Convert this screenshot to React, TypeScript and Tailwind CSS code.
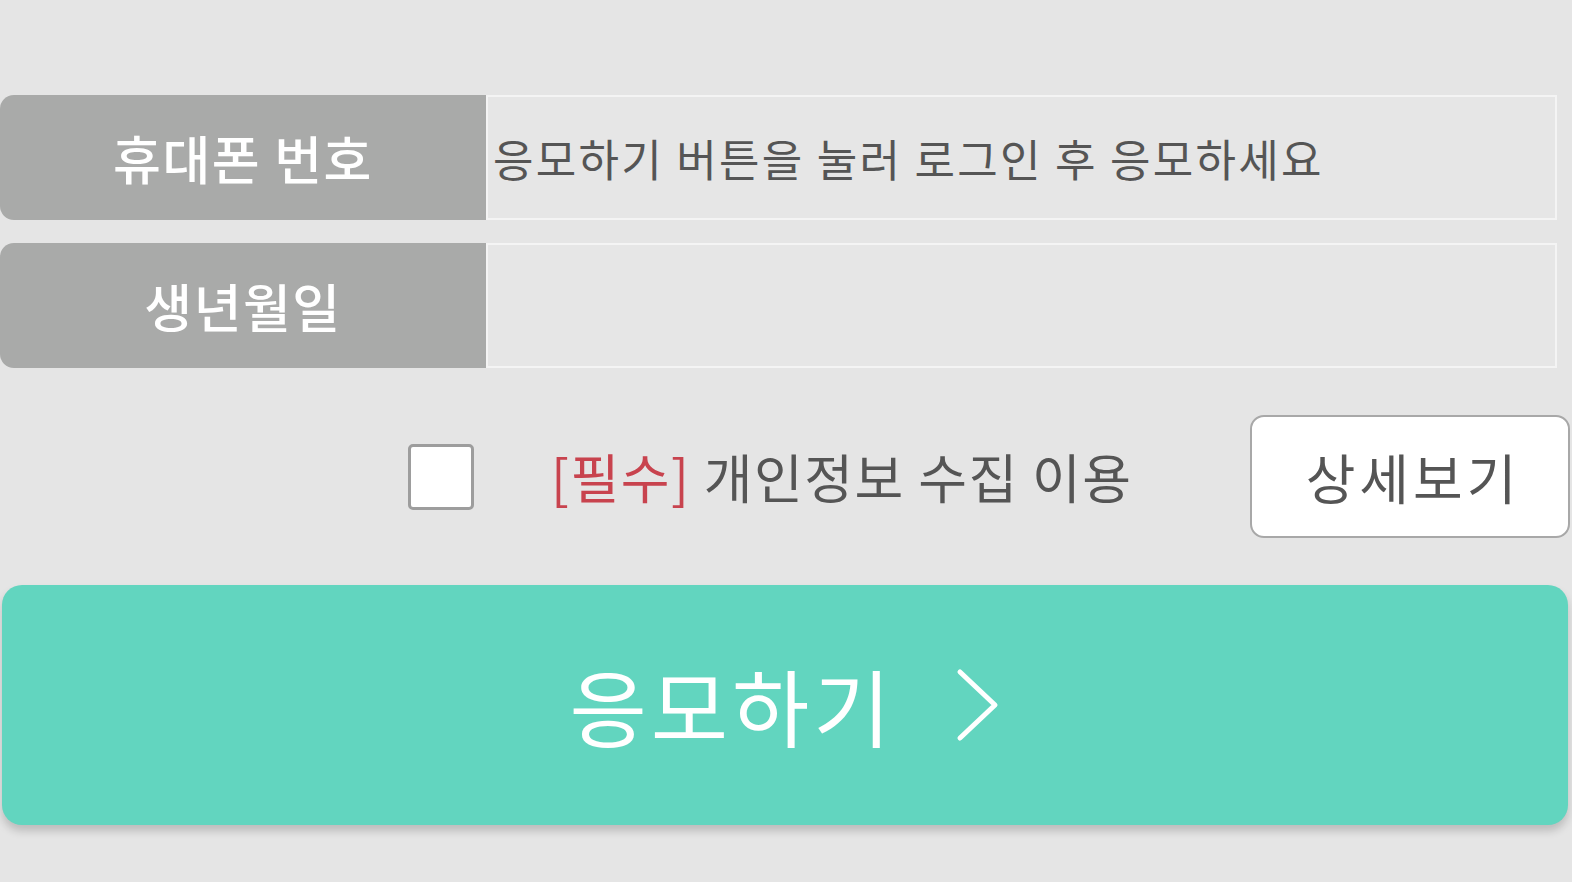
const font = { fontFamily: '"Noto Sans CJK KR", "Noto Sans", sans-serif' };

const Row = ({ label, placeholder }: { label: string; placeholder?: string }) => (
  <div className="flex h-[125px]">
    <div className="flex w-[486px] shrink-0 items-center justify-center rounded-l-[14px] bg-[#a9aaa9] text-[52px] font-medium tracking-[1.5px] text-white">
      {label}
    </div>
    <div className="flex w-[1071px] items-center border-2 border-[#f4f4f4] bg-[#e6e6e6] pl-[5px] text-[44px] tracking-[2.3px] text-[#555555]">
      {placeholder}
    </div>
  </div>
);

export default function App() {
  return (
    <div className="h-[882px] w-[1572px] overflow-hidden bg-[#e5e5e5] pt-[95px]" style={font}>
      <div className="flex flex-col gap-[23px]">
        <Row label="휴대폰 번호" placeholder="응모하기 버튼을 눌러 로그인 후 응모하세요" />
        <Row label="생년월일" />
      </div>

      <div className="mt-[47px] flex h-[123px] items-center pl-[408px] pr-[2px]">
        <div className="h-[66px] w-[66px] shrink-0 rounded-[5px] border-[3px] border-[#9d9d9d] bg-white" />
        <div className="ml-[77px] text-[53px] tracking-[1.5px] text-[#555555]">
          <span className="text-[#c8434e]">[필수]</span> 개인정보 수집 이용
        </div>
        <button
          type="button"
          className="ml-auto flex h-[123px] w-[320px] items-center justify-center rounded-[14px] border-2 border-[#a8a8a8] bg-white pl-[6px] text-[54px] tracking-[4px] text-[#555555]"
        >
          상세보기
        </button>
      </div>

      <button
        type="button"
        className="ml-[2px] mt-[47px] flex h-[240px] w-[1566px] items-center justify-center gap-[60px] rounded-[20px] bg-[#62d5bf] text-[84px] tracking-[4px] text-white shadow-[0_6px_8px_rgba(0,0,0,0.18)]"
      >
        <span>응모하기</span>
        <svg width="46" height="74" viewBox="0 0 46 74" fill="none">
          <polyline points="5,4 40,37 5,70" stroke="white" strokeWidth="5" strokeLinecap="round" strokeLinejoin="round" />
        </svg>
      </button>
    </div>
  );
}
